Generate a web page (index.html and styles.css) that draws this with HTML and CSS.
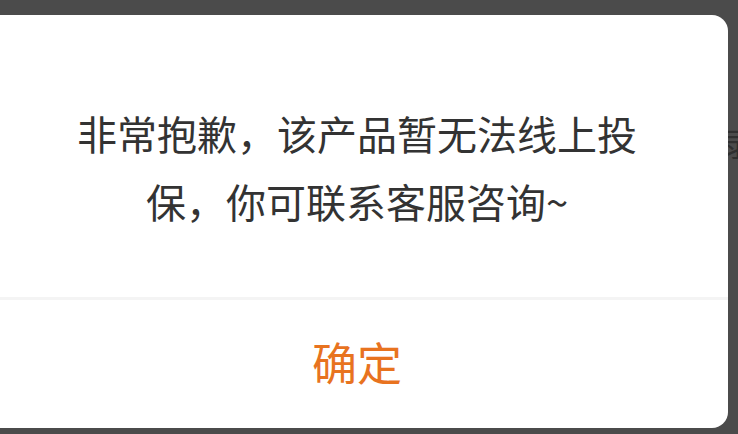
FILE: index.html
```html
<!DOCTYPE html>
<html lang="zh-CN">
<head>
<meta charset="utf-8">
<link rel="stylesheet" href="styles.css">
</head>
<body>
<div class="page">
  <span class="behind">录</span>
  <div class="dialog">
    <div class="message">非常抱歉，该产品暂无法线上投保，你可联系客服咨询~</div>
    <div class="actions"><button class="confirm">确定</button></div>
  </div>
</div>
</body>
</html>
```
FILE: styles.css
```css
html, body {
  margin: 0;
  padding: 0;
  background: #4b4b4b;
  width: 738px;
  height: 434px;
  overflow: hidden;
  font-family: "Noto Sans CJK SC", "Noto Sans", sans-serif;
}
.page {
  position: relative;
  width: 738px;
  height: 434px;
  padding-top: 15px;
  box-sizing: border-box;
}
.behind {
  position: absolute;
  left: 722px;
  top: 122px;
  font-size: 32px;
  line-height: 40px;
  color: #2f2f2f;
}
.dialog {
  position: relative;
  margin-left: -14px;
  width: 742px;
  height: 413px;
  background: #ffffff;
  border-radius: 16px;
  display: flex;
  flex-direction: column;
  overflow: hidden;
}
.message {
  height: 285px;
  box-sizing: border-box;
  padding: 84px 86px 0;
  font-size: 40px;
  line-height: 68px;
  color: #333333;
  text-align: center;
  border-bottom: 3px solid #f4f4f4;
}
.actions {
  flex: 1;
  display: flex;
  align-items: center;
  justify-content: center;
}
.confirm {
  border: 0;
  background: none;
  padding: 0 0 4px;
  font-family: inherit;
  font-size: 45px;
  line-height: 60px;
  color: #e8731f;
}
```
